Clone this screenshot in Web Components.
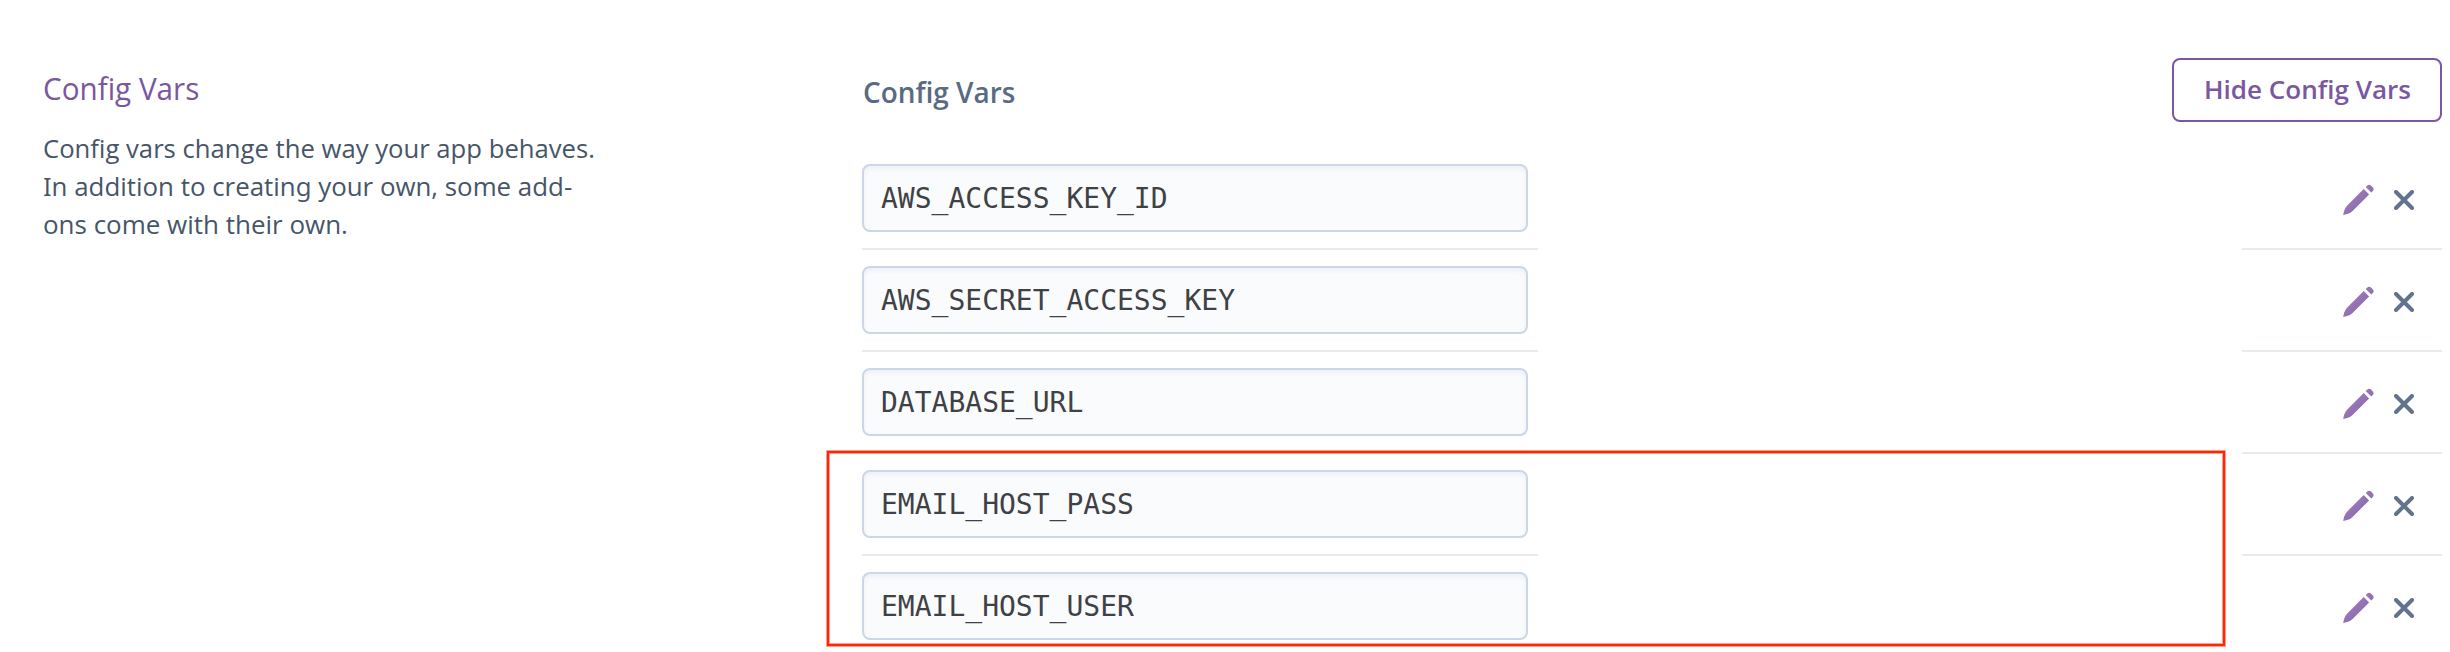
<!DOCTYPE html>
<html lang="en">
<head>
<meta charset="utf-8">
<title>Config Vars</title>
<style>
html,body{margin:0;height:652px;overflow:hidden;background:#fff}
body{font-family:"Open Sans","Noto Sans",sans-serif;font-variant-ligatures:common-ligatures discretionary-ligatures}
</style>
</head>
<body>
<config-page></config-page>
<script>
const define=(name,html)=>customElements.define(name,class extends HTMLElement{
  constructor(){super();this.attachShadow({mode:"open"}).innerHTML=html;}
});

define("fit-text",`<style>
:host{display:block;white-space:nowrap;transform-origin:0 50%;transform:scaleX(var(--sx,1))}
</style><slot></slot>`);

define("section-intro",`<style>
:host{display:block;padding:65px 0 0 43px;box-sizing:border-box}
h2{margin:0;font-size:31px;line-height:46px;font-weight:400;color:#79589f}
p{margin:18px 0 0;font-size:26px;line-height:38px;color:#475569}
h2 fit-text{--sx:.956}
.a{--sx:.987}.b{--sx:.995;font-feature-settings:"ss01","ss02","ss03"}.c{--sx:.999}
</style>
<h2><fit-text>Config Vars</fit-text></h2>
<p><fit-text class="a">Config vars change the way your app behaves.</fit-text>
<fit-text class="b">In addition to creating your own, some add-</fit-text>
<fit-text class="c">ons come with their own.</fit-text></p>`);

define("outline-button",`<style>
:host{display:block;width:270px;height:64px}
button{all:unset;box-sizing:border-box;display:block;width:100%;height:100%;border:2px solid #79589f;border-radius:8px;padding:0 0 3px 30px;font-size:26px;line-height:38px;font-weight:600;color:#79589f}
fit-text{--sx:1.002}
</style><button><fit-text><slot></slot></fit-text></button>`);

define("pencil-icon",`<style>:host{display:block;width:32px;height:32px}svg{display:block}</style>
<svg width="32" height="32" viewBox="0 0 32 32"><defs><linearGradient id="g" x1="0" y1="0" x2="1" y2="1"><stop offset=".25" stop-color="#9e7cc0"/><stop offset=".8" stop-color="#8666a9"/></linearGradient></defs>
<path fill="url(#g)" d="M.2 31 1 27Q2 24 4 21.700L20.700 5l5.400 5.400L9.300 27.200Q7.200 29.200 4.200 30ZM22.700 3 24.300 1.500Q26-.3 28.300 1.700L29.700 3.200Q31.400 5.200 29.800 7L28.300 8.500Z"/></svg>`);

define("close-icon",`<style>:host{display:block;width:20px;height:20px}svg{display:block}</style>
<svg width="20" height="20" viewBox="0 0 20 20"><path d="M2 2 18 18M18 2 2 18" fill="none" stroke="#62738d" stroke-width="4" stroke-linecap="round"/></svg>`);

define("var-row",`<style>
:host{display:flex;justify-content:space-between;height:102px}
.key,.actions{box-sizing:border-box;height:102px;border-bottom:2px solid #e6ebf1}
.key{width:675.500px;padding-top:16px}
.field{box-sizing:border-box;width:666px;height:68px;border:2px solid #cbd7e7;border-radius:8px;background:#fafbfd;box-shadow:inset 0 3px 4px #edf0f7;padding:0 17px;font:28px/66px "DejaVu Sans Mono",monospace;color:#404144}
.actions{width:200.500px;display:flex;align-items:flex-start;padding:36px 28px 0 0;justify-content:flex-end;gap:19px}
close-icon{margin-top:6px}
</style>
<div class="key"><div class="field"><slot></slot></div></div>
<div class="actions"><pencil-icon></pencil-icon><close-icon></close-icon></div>`);

define("config-vars",`<style>
:host{display:block;padding-top:58px}
header{display:flex;justify-content:space-between;height:90px}
h3{margin:0;padding:14px 0 0 1px;font-size:28px;line-height:40px;font-weight:600;color:#596b84}
h3 fit-text{--sx:.997}
</style>
<header><h3><fit-text>Config Vars</fit-text></h3><outline-button>Hide Config Vars</outline-button></header>
<slot></slot>`);

define("highlight-box",`<style>
:host{position:absolute;left:827px;top:451px;width:1398px;height:195px;box-sizing:border-box;border:2px solid #ff2600;box-shadow:0 0 0 1px #ff9d8e,inset 0 0 0 1px #ff9d8e;pointer-events:none}
</style>`);

define("config-page",`<style>
:host{display:grid;grid-template-columns:862px 1580px;position:relative;width:2450px;height:652px;overflow:hidden}
</style>
<section-intro></section-intro>
<config-vars>
<var-row>AWS_ACCESS_KEY_ID</var-row>
<var-row>AWS_SECRET_ACCESS_KEY</var-row>
<var-row>DATABASE_URL</var-row>
<var-row>EMAIL_HOST_PASS</var-row>
<var-row>EMAIL_HOST_USER</var-row>
</config-vars>
<highlight-box></highlight-box>`);
</script>
</body>
</html>
